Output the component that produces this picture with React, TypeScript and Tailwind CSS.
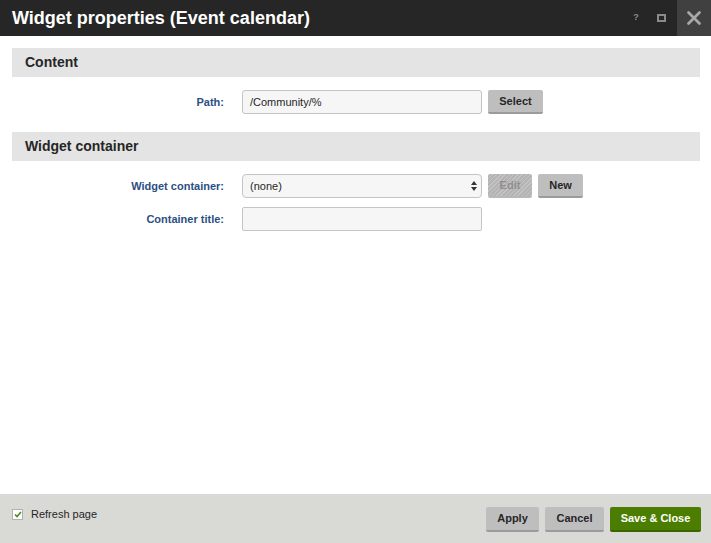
import { X } from "lucide-react";

const font = { fontFamily: '"Liberation Sans", Arial, sans-serif' };

function SectionHeader({ title }: { title: string }) {
  return (
    <div className="ml-3 mr-[11px] h-[29px] bg-[#e4e4e4] flex items-center pl-[13px]">
      <h2 className="text-[14px] font-bold text-[#262626]">{title}</h2>
    </div>
  );
}

function GrayButton({ label, w, disabled }: { label: string; w: string; disabled?: boolean }) {
  return (
    <button
      type="button"
      className={
        "h-[24px] rounded-[2px] border-b-2 text-[11px] font-bold " +
        w +
        (disabled
          ? " border-[#b8b8b8] text-[#8f8f8f] bg-[repeating-linear-gradient(135deg,#c4c4c4_0px,#c4c4c4_1px,#b4b4b4_1px,#b4b4b4_3px)]"
          : " border-[#9b9b9b] bg-[#bfbebe] text-[#262626]")
      }
    >
      {label}
    </button>
  );
}

function Row({ label, children }: { label: string; children: React.ReactNode }) {
  return (
    <div className="flex items-center h-[24px]">
      <label className="w-[224px] text-right text-[11px] font-bold text-[#2c4f85]">{label}</label>
      <div className="ml-[18px] flex items-center gap-[6px]">{children}</div>
    </div>
  );
}

export default function App() {
  return (
    <div className="w-[711px] h-[543px] flex flex-col bg-white" style={font}>
      {/* Title bar */}
      <div className="h-[36px] bg-[#262626] flex items-center shrink-0">
        <h1 className="flex-1 pl-3 text-white text-[18px] font-bold">
          Widget properties (Event calendar)
        </h1>
        <span className="w-[28px] text-center text-[9px] font-bold text-[#8a8a8a]">?</span>
        <span className="w-[22px] flex justify-center">
          <span className="w-[9px] h-[8px] border-2 border-[#8a8a8a]" />
        </span>
        <button type="button" className="ml-[5px] w-[34px] h-[36px] bg-[#404040] flex items-center justify-center">
          <X className="w-[22px] h-[22px] text-[#a8a8a8]" strokeWidth={3} />
        </button>
      </div>

      {/* Body */}
      <div className="flex-1 pt-3">
        <SectionHeader title="Content" />
        <div className="pt-[13px] pb-[18px]">
          <Row label="Path:">
            <div className="w-[240px] h-[24px] rounded-[3px] border border-[#c4c4c4] bg-[#f6f6f6] flex items-center pl-[7px] text-[11px] text-[#262626]">
              /Community/%
            </div>
            <GrayButton label="Select" w="w-[55px]" />
          </Row>
        </div>

        <SectionHeader title="Widget container" />
        <div className="pt-[13px] flex flex-col gap-[9px]">
          <Row label="Widget container:">
            <div className="w-[240px] h-[24px] rounded-[4px] border border-[#c4c4c4] bg-[#f6f6f6] flex items-center pl-[7px] pr-[4px] text-[11px] text-[#262626]">
              <span className="flex-1">(none)</span>
              <svg width="6" height="10" viewBox="0 0 6 10">
                <path d="M0 4 L3 0 L6 4 Z M0 6 L3 10 L6 6 Z" fill="#333" />
              </svg>
            </div>
            <GrayButton label="Edit" w="w-[44px]" disabled />
            <GrayButton label="New" w="w-[45px]" />
          </Row>
          <Row label="Container title:">
            <div className="w-[240px] h-[24px] rounded-[2px] border border-[#c4c4c4] bg-[#f6f6f6]" />
          </Row>
        </div>
      </div>

      {/* Footer */}
      <div className="h-[49px] bg-[#d9dad6] flex items-center justify-between pl-3 pr-[10px] shrink-0">
        <label className="flex items-center gap-[8px] -mt-[9px] text-[11px] text-[#262626]">
          <span className="w-[11px] h-[11px] bg-white border border-[#b0b0b0] flex items-center justify-center">
            <svg width="8" height="7" viewBox="0 0 8 7">
              <path d="M1 3.5 L3 5.5 L7 1" stroke="#4a8a1a" strokeWidth="1.6" fill="none" />
            </svg>
          </span>
          Refresh page
        </label>
        <div className="flex items-center gap-[6px] mt-[2px]">
          <button type="button" className="h-[25px] w-[53px] rounded-[2px] border-b-2 border-[#9b9b9b] bg-[#bfbebe] text-[11px] font-bold text-[#262626]">
            Apply
          </button>
          <button type="button" className="h-[25px] w-[59px] rounded-[2px] border-b-2 border-[#9b9b9b] bg-[#bfbebe] text-[11px] font-bold text-[#262626]">
            Cancel
          </button>
          <button type="button" className="h-[25px] w-[91px] rounded-[2px] border-b-2 border-[#3b6400] bg-[#4b7d00] text-[11px] font-bold text-white">
            Save &amp; Close
          </button>
        </div>
      </div>
    </div>
  );
}
